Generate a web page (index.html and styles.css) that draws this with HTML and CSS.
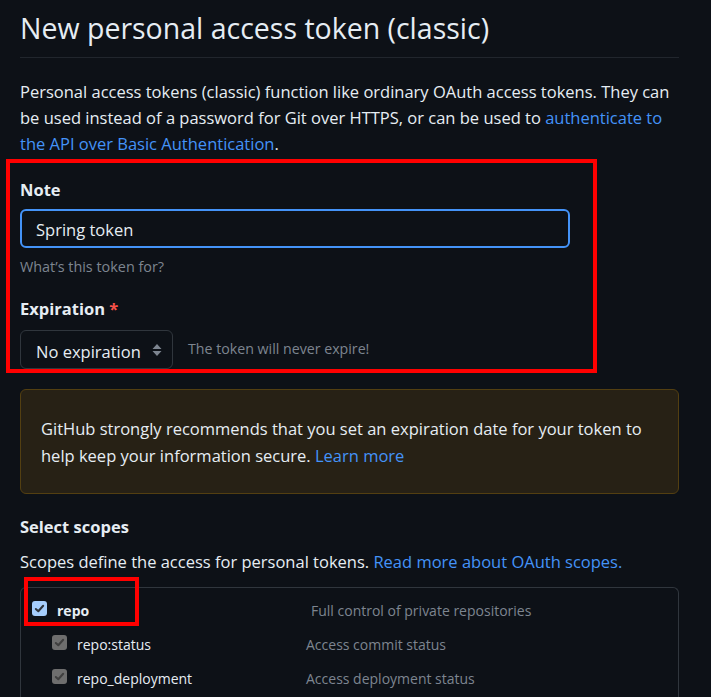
FILE: index.html
```html
<!DOCTYPE html>
<html lang="en">
<head>
<meta charset="utf-8">
<title>New personal access token (classic)</title>
<link rel="stylesheet" href="styles.css">
</head>
<body>
<main class="page">
  <div class="subhead">
    <h1 class="subhead-title">New personal access token (classic)</h1>
  </div>
  <p class="intro">Personal access tokens (classic) function like ordinary OAuth access tokens. They can be used instead of a password for Git over HTTPS, or can be used to <a href="#">authenticate to the API over Basic Authentication</a>.</p>

  <div class="highlight">
    <div class="form-group">
      <label class="label">Note</label>
      <div class="input focus">Spring token</div>
      <p class="note">What’s this token for?</p>
    </div>
    <div class="form-group">
      <label class="label">Expiration <span class="req">*</span></label>
      <div class="select-row">
        <div class="select"><span class="select-text">No expiration</span>
          <svg class="updown" width="10" height="14" viewBox="0 0 10 14"><path d="M5 1 L9.5 6 H0.5 Z M5 13 L0.5 8 H9.5 Z" fill="#7d8590"/></svg>
        </div>
        <span class="select-note">The token will never expire!</span>
      </div>
    </div>
  </div>

  <div class="flash">GitHub strongly recommends that you set an expiration date for your token to help keep your information secure. <a href="#">Learn more</a></div>

  <h2 class="section-title">Select scopes</h2>
  <p class="section-desc">Scopes define the access for personal tokens. <a href="#">Read more about OAuth scopes.</a></p>

  <div class="scopes">
    <div class="scope-row parent">
      <span class="cb checked"><svg width="11" height="11" viewBox="0 0 12 12"><path d="M2 6.5 L4.7 9 L10 3" fill="none" stroke="#2d333b" stroke-width="2.2" stroke-linecap="round" stroke-linejoin="round"/></svg></span>
      <span class="scope-name">repo</span>
      <span class="scope-desc">Full control of private repositories</span>
      <span class="mark"></span>
    </div>
    <div class="scope-row child">
      <span class="cb disabled"><svg width="11" height="11" viewBox="0 0 12 12"><path d="M2 6.5 L4.7 9 L10 3" fill="none" stroke="#3f3f3f" stroke-width="2.2" stroke-linecap="round" stroke-linejoin="round"/></svg></span>
      <span class="scope-name">repo:status</span>
      <span class="scope-desc">Access commit status</span>
    </div>
    <div class="scope-row child">
      <span class="cb disabled"><svg width="11" height="11" viewBox="0 0 12 12"><path d="M2 6.5 L4.7 9 L10 3" fill="none" stroke="#3f3f3f" stroke-width="2.2" stroke-linecap="round" stroke-linejoin="round"/></svg></span>
      <span class="scope-name">repo_deployment</span>
      <span class="scope-desc">Access deployment status</span>
    </div>
  </div>
</main>
</body>
</html>
```
FILE: styles.css
```css
html, body {
  margin: 0;
  padding: 0;
  background: #0d1117;
}
body {
  color: #e6edf3;
  font-family: "Open Sans", "Noto Sans", sans-serif;
  font-size: 16.5px;
  overflow: hidden;
  height: 697px;
}
a {
  color: #4493f8;
  text-decoration: none;
}
.page {
  padding: 0 32px 0 20px;
}
.subhead {
  padding-top: 8px;
  padding-bottom: 9px;
  border-bottom: 1px solid #21262d;
}
.subhead-title {
  margin: 0;
  font-size: 28.5px;
  font-weight: 400;
  line-height: 40px;
}
.intro {
  margin: 21px 0 0;
  line-height: 26px;
}
.highlight {
  margin: 2px 0 0 -14px;
  width: 591px;
  box-sizing: border-box;
  border: 4px solid #ff0000;
  padding: 14px 10px 0;
}
.label {
  display: block;
  font-weight: 700;
  line-height: 26px;
}
.req {
  color: #f85149;
}
.input {
  margin-top: 6px;
  width: 550px;
  height: 39px;
  box-sizing: border-box;
  border: 2px solid #4493f8;
  border-radius: 6px;
  padding: 2px 14px 0;
  display: flex;
  align-items: center;
  font-size: 16.5px;
}
.note {
  margin: 8px 0 0;
  font-size: 14.4px;
  line-height: 22px;
  color: #7d8590;
}
.form-group + .form-group {
  margin-top: 18px;
}
.select-row {
  margin-top: 8px;
  display: flex;
  align-items: center;
  gap: 15px;
}
.select {
  width: 153px;
  height: 39px;
  box-sizing: border-box;
  border: 1px solid #30363d;
  border-radius: 6px;
  padding: 0 10px 0 15px;
  display: flex;
  align-items: center;
  justify-content: space-between;
}
.select-text {
  padding-top: 3px;
}
.updown {
  display: block;
}
.select-note {
  font-size: 14.2px;
  color: #7d8590;
  margin-top: -3px;
}
.flash {
  margin-top: 16px;
  background: #272115;
  border: 1px solid #533f11;
  border-radius: 6px;
  padding: 25px 20px 24px;
  line-height: 27px;
}
.section-title {
  margin: 20px 0 0;
  font-size: 16.5px;
  font-weight: 700;
  line-height: 26px;
}
.section-desc {
  margin: 9px 0 0;
  line-height: 26px;
}
.scopes {
  margin-top: 12px;
  border: 1px solid #30363d;
  border-bottom: 0;
  border-radius: 6px 6px 0 0;
  padding-top: 5px;
  height: 120px;
}
.scope-row {
  position: relative;
  display: flex;
  align-items: center;
  height: 34px;
  font-size: 14px;
}
.scope-row.parent {
  padding-left: 11px;
}
.scope-row.child {
  padding-left: 31px;
}
.cb {
  width: 15px;
  height: 15px;
  box-sizing: border-box;
  border-radius: 3px;
  display: flex;
  align-items: center;
  justify-content: center;
  flex: none;
  margin-top: -4px;
}
.cb.checked {
  background: #a5cdfc;
}
.cb.disabled {
  background: #6e6e6e;
}
.scope-name {
  margin-left: 10px;
}
.parent .scope-name {
  font-weight: 700;
  width: 254px;
}
.child .scope-name {
  width: 229px;
}
.scope-desc {
  color: #7d8590;
}
.mark {
  position: absolute;
  left: 3px;
  top: -16px;
  width: 115px;
  height: 49px;
  box-sizing: border-box;
  border: 4px solid #ff0000;
}
```
